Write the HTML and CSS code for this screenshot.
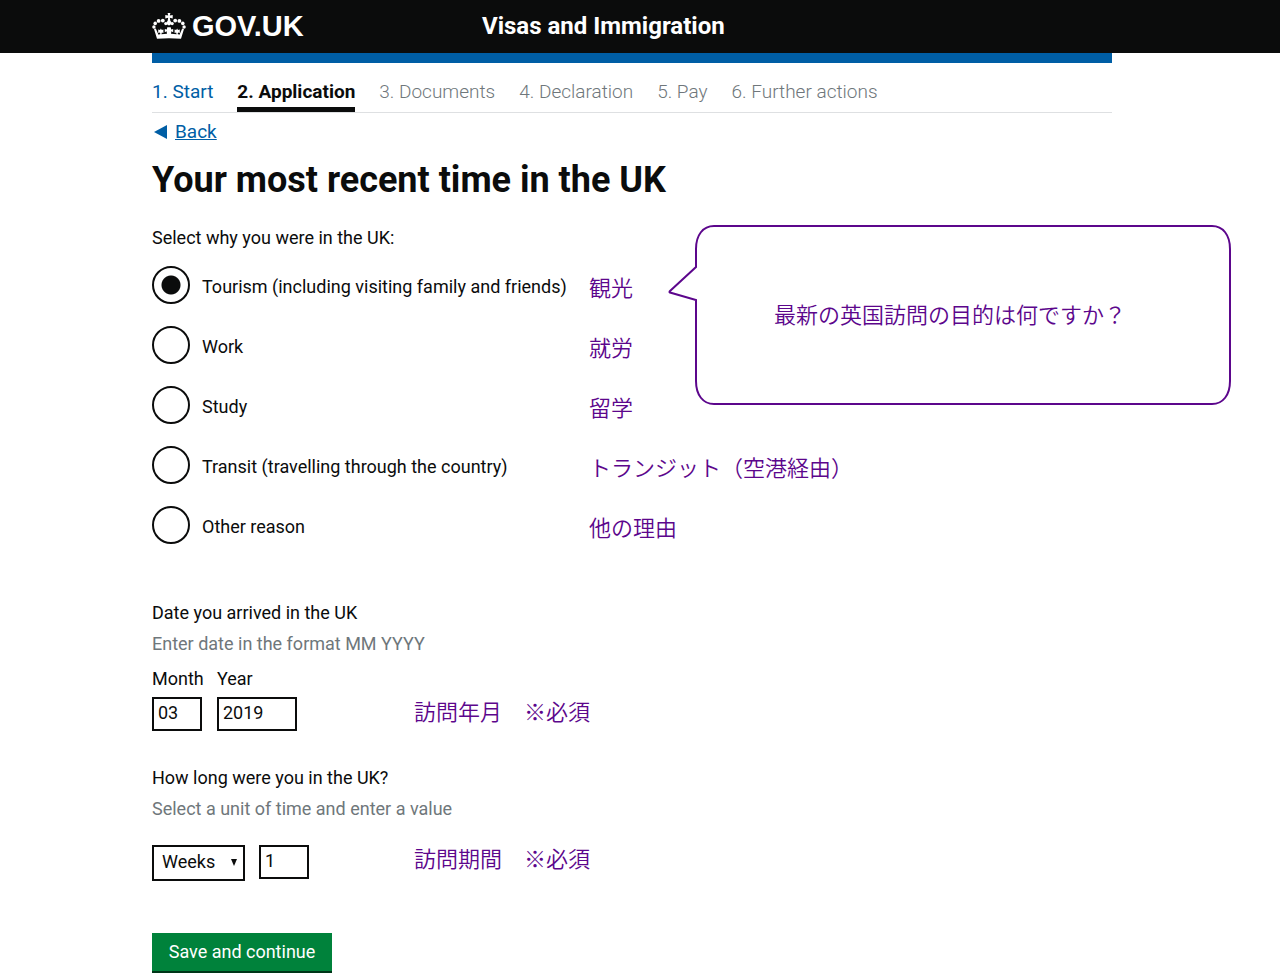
FILE: index.html
```html
<!DOCTYPE html>
<html lang="en">
<head>
<meta charset="utf-8">
<title>Your most recent time in the UK - Visas and Immigration - GOV.UK</title>
<link rel="stylesheet" href="styles.css">
</head>
<body>
<header class="header">
  <div class="container header-inner">
    <a class="logo" href="#">
      <svg class="crown" viewBox="0 0 34 26" aria-hidden="true">
        <g fill="currentColor">
          <circle cx="1.900" cy="14" r="1.700"/><circle cx="3.200" cy="10.400" r="1.800"/><circle cx="6.600" cy="7.900" r="1.900"/><circle cx="10.800" cy="7.600" r="1.900"/><circle cx="13.800" cy="10.600" r="1.600"/>
          <circle cx="32.100" cy="14" r="1.700"/><circle cx="30.800" cy="10.400" r="1.800"/><circle cx="27.400" cy="7.900" r="1.900"/><circle cx="23.200" cy="7.600" r="1.900"/><circle cx="20.200" cy="10.600" r="1.600"/>
          <path d="M15.600 0h2.800l-.6 2.600 2.900-.6v3.400l-2.900-.7.6 3.300a2.300 2.300 0 1 1-2.800 0l.6-3.300-2.900.7V2l2.900.6z"/>
          <path d="M5 25.700L2 16l1.800-.4 2.700 6.200 2-.8-.8-1.600-1.500.5v-3.400l1.800.5.9-1.600.9 1.600 1.600-.5v3.400l-1.500-.5-.5 1.800 5.600-.5-.4-2.400-1.800 1v-3.400l2 .7.5-2.300h3.400l.5 2.300 2-.7v3.400l-1.800-1-.4 2.400 5.600.5-.5-1.800-1.500.5v-3.400l1.600.5.900-1.600.9 1.600 1.800-.5v3.400l-1.500-.5-.8 1.600 2 .8 2.700-6.200L32 16l-3 9.700Q17 24.600 5 25.700z"/>
        </g>
      </svg>
      <span>GOV.UK</span>
    </a>
    <a class="service" href="#">Visas and Immigration</a>
  </div>
</header>
<div class="container">
  <nav class="steps" aria-label="Progress">
    <ol class="step-list">
      <li class="step"><a class="step-link" href="#">1. Start</a></li>
      <li class="step step-current" aria-current="step">2. Application</li>
      <li class="step">3. Documents</li>
      <li class="step">4. Declaration</li>
      <li class="step">5. Pay</li>
      <li class="step">6. Further actions</li>
    </ol>
  </nav>
  <main>
    <a class="back" href="#"><svg class="back-arrow" viewBox="0 0 13 14" aria-hidden="true"><path d="M0 7L13 0v14z" fill="currentColor"/></svg><span class="back-text">Back</span></a>
    <h1 class="title">Your most recent time in the UK</h1>
    <form>
      <fieldset class="group reasons">
        <legend class="question">Select why you were in the UK:</legend>
        <div class="choice"><input class="radio" type="radio" name="reason" id="tourism" checked><label class="choice-label" for="tourism">Tourism (including visiting family and friends)</label><span class="note" lang="ja">観光</span></div>
        <div class="choice"><input class="radio" type="radio" name="reason" id="work"><label class="choice-label" for="work">Work</label><span class="note" lang="ja">就労</span></div>
        <div class="choice"><input class="radio" type="radio" name="reason" id="study"><label class="choice-label" for="study">Study</label><span class="note" lang="ja">留学</span></div>
        <div class="choice"><input class="radio" type="radio" name="reason" id="transit"><label class="choice-label" for="transit">Transit (travelling through the country)</label><span class="note" lang="ja">トランジット（空港経由）</span></div>
        <div class="choice"><input class="radio" type="radio" name="reason" id="other"><label class="choice-label" for="other">Other reason</label><span class="note" lang="ja">他の理由</span></div>
        <aside class="callout" lang="ja">
          <svg class="callout-shape" viewBox="0 0 564 182" aria-hidden="true"><path d="M28 43V25C28 11 35 2 46 2H544C555 2 562 11 562 25V157C562 171 555 180 544 180H46C35 180 28 171 28 157V76L2 68.500Q1 68 2 67z" fill="#fff" stroke="currentColor" stroke-width="2"/></svg>
          <p class="callout-text">最新の英国訪問の目的は何ですか？</p>
        </aside>
      </fieldset>
      <fieldset class="group arrival">
        <legend class="question">Date you arrived in the UK</legend>
        <p class="hint">Enter date in the format MM YYYY</p>
        <div class="answer">
          <div class="fields">
            <div class="field"><label for="month">Month</label><input class="text" id="month" type="text" value="03"></div>
            <div class="field"><label for="year">Year</label><input class="text text-year" id="year" type="text" value="2019"></div>
          </div>
          <span class="note" lang="ja">訪問年月　※必須</span>
        </div>
      </fieldset>
      <fieldset class="group duration">
        <legend class="question">How long were you in the UK?</legend>
        <p class="hint">Select a unit of time and enter a value</p>
        <div class="answer answer-duration">
          <div class="fields">
            <div class="select-wrap">
              <select class="select" aria-label="Unit of time"><option>Weeks</option><option>Days</option><option>Months</option></select>
              <svg class="select-arrow" viewBox="0 0 6 7" aria-hidden="true"><path d="M0 0h6L3 7z" fill="currentColor"/></svg>
            </div>
            <input class="text" type="text" value="1" aria-label="Length of stay">
          </div>
          <span class="note" lang="ja">訪問期間　※必須</span>
        </div>
      </fieldset>
      <button class="button" type="submit">Save and continue</button>
    </form>
  </main>
</div>
</body>
</html>
```

FILE: styles.css
```css
*, *::before, *::after { box-sizing: border-box; }

body {
  margin: 0;
  color: #0b0c0c;
  background: #fff;
  font: 18px/20px Roboto, "Liberation Sans", sans-serif;
}

h1, p, ol, fieldset { margin: 0; padding: 0; }
input, select, button { margin: 0; font: inherit; color: inherit; }

.container { max-width: 960px; margin-left: max(16px, calc(50% - 488px)); margin-right: 16px; }

.header { background: #0b0c0c; color: #fff; }
.header-inner { display: grid; grid-template-columns: 330px 1fr; align-items: center; height: 53px; padding-bottom: 2px; }
.logo { display: flex; align-items: center; gap: 6px; color: #fff; text-decoration: none; font: bold 29px/30px "Liberation Sans", sans-serif; }
.crown { width: 34px; height: 26px; }
.service { color: #fff; text-decoration: none; font-size: 24px; line-height: 30px; font-weight: 700; }

.steps { border-top: 10px solid #005ea5; border-bottom: 1px solid #dee0e2; }
.step-list { display: flex; gap: 24px; list-style: none; color: #6f777b; font-size: 19px; font-weight: 300; }
.step { padding-top: 19px; height: 49px; }
.step-current { color: #0b0c0c; font-weight: 700; border-bottom: 5px solid #0b0c0c; }
.step-link { color: #005ea5; text-decoration: none; font-weight: 400; }

.back { display: flex; align-items: center; gap: 8px; width: max-content; margin-top: 9px; padding-left: 2px; color: #005ea5; text-decoration: none; font-size: 19px; }
.back-arrow { width: 13px; height: 14px; }
.back-text { text-decoration: underline; }
.title { margin-top: 18px; font-size: 36px; line-height: 40px; font-weight: 700; }

.group { border: 0; min-width: 0; }
.question { padding: 0; }
.reasons { position: relative; margin-top: 28px; }
.choice { display: grid; grid-template-columns: 38px 375px 1fr; column-gap: 12px; align-items: center; height: 38px; margin-top: 22px; }
.question + .choice { margin-top: 18px; }
.radio { appearance: none; width: 38px; height: 38px; border: 2px solid #0b0c0c; border-radius: 50%; background: #fff; }
.radio:checked { background: radial-gradient(circle, #0b0c0c 9px, #fff 10px); }
.choice-label { padding-top: 4px; }
.note, .callout-text { color: #5c068c; font: 350 22px/24px "Noto Sans CJK JP", sans-serif; }
.choice .note { padding-top: 2px; }

.callout { position: absolute; top: -24px; left: 516px; width: 564px; height: 182px; color: #5c068c; }
.callout-shape { display: block; width: 100%; height: 100%; }
.callout-text { position: absolute; inset: 77px 0 auto 106px; }

.arrival { margin-top: 59px; }
.hint { margin-top: 11px; color: #6f777b; }
.answer { display: grid; grid-template-columns: 262px 1fr; margin-top: 15px; align-items: end; }
.answer .note { padding-bottom: 9px; }
.fields { display: flex; gap: 15px; align-items: flex-start; }
.field { display: flex; flex-direction: column; gap: 8px; width: 50px; }
.text { width: 50px; height: 34px; padding: 0 4px 4px; border: 2px solid #0b0c0c; border-radius: 0; background: #fff; }
.text-year { width: 80px; }

.duration { margin-top: 37px; }
.answer-duration { margin-top: 26px; }
.answer-duration .note { padding-bottom: 12px; }
.answer-duration .fields { gap: 14px; }
.select-wrap { position: relative; }
.select { appearance: none; display: block; width: 93px; height: 36px; padding: 0 20px 2px 8px; border: 2px solid #0b0c0c; border-radius: 0; background: #fff; }
.select-arrow { position: absolute; right: 8px; top: 14px; width: 6px; height: 7px; pointer-events: none; }

.button { display: block; min-width: 180px; height: 40px; margin-top: 52px; padding: 0 14px; border: 0; border-bottom: 2px solid #003618; background: #00823b; color: #fff; cursor: pointer; }
```
